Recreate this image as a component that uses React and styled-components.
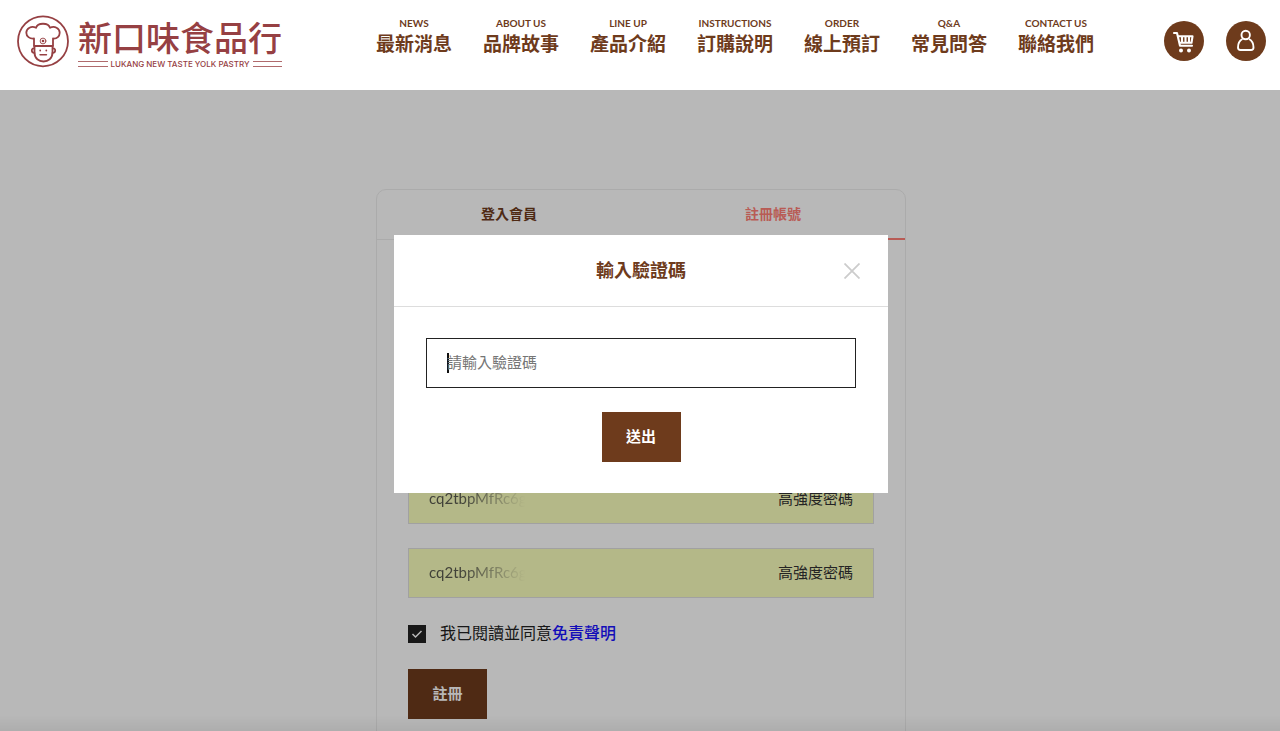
import React, { useState } from 'react';
import styled, { createGlobalStyle, css } from 'styled-components';

const brown = '#6e3b1c';
const logoRed = '#964043';
const coral = '#ff7f77';

const navItems = [
  { en: 'NEWS', label: '最新消息' },
  { en: 'ABOUT US', label: '品牌故事' },
  { en: 'LINE UP', label: '產品介紹' },
  { en: 'INSTRUCTIONS', label: '訂購說明' },
  { en: 'ORDER', label: '線上預訂' },
  { en: 'Q&A', label: '常見問答' },
  { en: 'CONTACT US', label: '聯絡我們' },
];

const ChefIcon = () => (
  <svg width="54" height="54" viewBox="0 0 54 54" aria-hidden="true">
    <g fill="none" stroke={logoRed} strokeWidth="1.8" strokeLinecap="round" strokeLinejoin="round">
      <circle cx="27" cy="27.3" r="25" />
      <path d="M18 32V24.5C13.5 25 10.3 22.2 10.3 18.8C10.3 14.3 15.5 11.3 20 13.8C21.5 8.4 32.5 8.4 34 13.8C38.5 11.3 43.7 14.3 43.7 18.8C43.7 22.2 41 25 37 24.5V32" />
      <path d="M18.5 32H36.5V38.5C36.5 50.5 18.5 50.5 18.5 38.5Z" />
      <path d="M18 34.500C15 34 15 39 18.500 39M37 34.500C40 34 40 39 36.500 39" />
      <path d="M24 40.8H30.5" strokeWidth="1.4" />
      <circle cx="27" cy="27" r="2.9" strokeWidth="0.9" />
    </g>
    <g fill={logoRed}>
      <circle cx="27" cy="27" r="1.3" />
      <circle cx="24.2" cy="36.5" r="0.9" />
      <circle cx="30.3" cy="36.5" r="0.9" />
    </g>
  </svg>
);

const CartIcon = () => (
  <svg width="40" height="40" viewBox="0 0 40 40" fill="none" stroke="#fff" strokeWidth="2.1">
    <path d="M10 12H13L16 24.8H28" strokeLinecap="round" strokeLinejoin="round" />
    <path d="M14 15.3H28.500L27.500 21.800H15.500" strokeLinejoin="round" />
    <path d="M18 15.5V22M21.500 15.5V22M25 15.5V22" />
    <circle cx="17" cy="29.5" r="2" fill="#fff" stroke="none" />
    <circle cx="25" cy="29.5" r="2" fill="#fff" stroke="none" />
  </svg>
);

const UserIcon = () => (
  <svg width="40" height="40" viewBox="0 0 40 40" fill="none" stroke="#fff" strokeWidth="1.9">
    <circle cx="19.7" cy="14" r="4.2" />
    <path
      d="M16.5 18C13.5 19.5 12 22.5 12 26.500Q12 29 14.500 29H25Q27.500 29 27.500 26.500C27.500 22.500 26 19.500 23 18"
      strokeLinejoin="round"
    />
  </svg>
);

const App = () => {
  const [open, setOpen] = useState(true);
  const [code, setCode] = useState('');
  const [agreed, setAgreed] = useState(true);

  //Event Handlers
  const closeHandler = () => setOpen(false);
  const submitHandler = (e) => {
    e.preventDefault();
    setOpen(false);
  };

  return (
    <>
      <GlobalStyle $locked={open} />
      <Header>
        <Logo href="#home">
          <ChefIcon />
          <Brand>
            <BrandName>新口味食品行</BrandName>
            <Tagline>LUKANG NEW TASTE YOLK PASTRY</Tagline>
          </Brand>
        </Logo>
        <Nav>
          {navItems.map((item) => (
            <NavLink href="#nav" key={item.en}>
              <small>{item.en}</small>
              <span>{item.label}</span>
            </NavLink>
          ))}
        </Nav>
        <Actions>
          <RoundButton type="button" aria-label="購物車">
            <CartIcon />
          </RoundButton>
          <RoundButton type="button" aria-label="會員">
            <UserIcon />
          </RoundButton>
        </Actions>
      </Header>

      <Main>
        <Card>
          <Tabs>
            <Tab type="button">登入會員</Tab>
            <Tab type="button" $active>
              註冊帳號
            </Tab>
          </Tabs>
          <Form onSubmit={(e) => e.preventDefault()}>
            <Field>
              <input type="text" aria-label="姓名" />
            </Field>
            <Field>
              <input type="tel" aria-label="手機" />
            </Field>
            <Field>
              <input type="email" aria-label="信箱" />
            </Field>
            <Field $autofill>
              <input type="text" aria-label="密碼" defaultValue="cq2tbpMfRc6g" />
              <span>高強度密碼</span>
            </Field>
            <Field $autofill>
              <input type="text" aria-label="確認密碼" defaultValue="cq2tbpMfRc6g" />
              <span>高強度密碼</span>
            </Field>
            <Agreement>
              <Checkbox
                id="agree"
                type="checkbox"
                checked={agreed}
                onChange={(e) => setAgreed(e.target.checked)}
              />
              <label htmlFor="agree">
                我已閱讀並同意<a href="#disclaimer">免責聲明</a>
              </label>
            </Agreement>
            <Button type="submit">註冊</Button>
          </Form>
        </Card>
      </Main>

      {open && (
        <Overlay>
          <Modal role="dialog" aria-modal="true" aria-labelledby="modal-title">
            <ModalHeader>
              <h2 id="modal-title">輸入驗證碼</h2>
              <CloseButton type="button" aria-label="關閉" onClick={closeHandler}>
                <svg width="16" height="16" viewBox="0 0 16 16" stroke="#ccc" strokeWidth="1.8">
                  <path d="M0.5 0.5L15.5 15.5M15.5 0.5L0.5 15.5" />
                </svg>
              </CloseButton>
            </ModalHeader>
            <ModalBody onSubmit={submitHandler}>
              <CodeInput
                autoFocus
                type="text"
                aria-label="驗證碼"
                placeholder="請輸入驗證碼"
                value={code}
                onChange={(e) => setCode(e.target.value)}
              />
              <Button type="submit">送出</Button>
            </ModalBody>
          </Modal>
        </Overlay>
      )}
    </>
  );
};

//Styled Components
const GlobalStyle = createGlobalStyle`
  * {
    box-sizing: border-box;
    margin: 0;
    padding: 0;
  }
  body {
    background: #fff;
    color: #222;
    font-family: Lato, 'Noto Sans CJK TC', sans-serif;
    overflow: ${(props) => (props.$locked ? 'hidden' : 'auto')};
  }
  button, input {
    font-family: inherit;
  }
  a {
    text-decoration: none;
  }
`;

const Header = styled.header`
  display: flex;
  align-items: flex-start;
  height: 90px;
  padding: 0 14px 0 16px;
  background: #fff;
  position: sticky;
  top: 0;
  z-index: 10;
`;
const Logo = styled.a`
  display: flex;
  gap: 8px;
  padding-top: 14px;
  color: ${logoRed};
  svg {
    display: block;
  }
`;
const Brand = styled.div`
  display: flex;
  flex-direction: column;
  gap: 3px;
  padding-top: 7px;
`;
const BrandName = styled.span`
  font-size: 34px;
  font-weight: 500;
  line-height: 34px;
`;
const Tagline = styled.small`
  display: flex;
  align-items: center;
  gap: 3px;
  font-family: Inter, sans-serif;
  font-size: 8px;
  font-weight: 500;
  line-height: 12px;
  white-space: nowrap;
  &::before,
  &::after {
    content: '';
    flex: 1;
    height: 4px;
    border: solid #b06a6c;
    border-width: 1px 0;
  }
`;
const Nav = styled.nav`
  display: flex;
  gap: 31px;
  margin-left: auto;
  padding-top: 16px;
`;
const NavLink = styled.a`
  display: flex;
  flex-direction: column;
  align-items: center;
  width: 76px;
  color: ${brown};
  font-weight: 700;
  white-space: nowrap;
  small {
    font-size: 10px;
    line-height: 14px;
  }
  span {
    font-size: 19px;
    line-height: 28px;
  }
`;
const Actions = styled.div`
  display: flex;
  gap: 22px;
  margin-left: 70px;
  padding-top: 21px;
`;
const RoundButton = styled.button`
  width: 40px;
  height: 40px;
  border: none;
  border-radius: 50%;
  background: ${brown};
  cursor: pointer;
  svg {
    display: block;
  }
`;

const Main = styled.main`
  padding: 99px 14px 64px 16px;
`;
const Card = styled.section`
  max-width: 530px;
  margin: 0 auto;
  border: 1px solid #eee;
  border-radius: 10px;
`;
const Tabs = styled.div`
  display: flex;
`;
const Tab = styled.button`
  flex: 1;
  height: 50px;
  padding-bottom: 3px;
  border: none;
  border-bottom: 1px solid #eee;
  background: transparent;
  color: ${brown};
  font-size: 14px;
  font-weight: 700;
  cursor: pointer;
  ${(props) =>
    props.$active &&
    css`
      color: ${coral};
      border-bottom-color: ${coral};
      box-shadow: inset 0 -1px ${coral};
    `}
`;
const Form = styled.form`
  display: flex;
  flex-direction: column;
  align-items: flex-start;
  gap: 24px;
  padding: 12px 31px 32px;
`;
const Field = styled.div`
  display: flex;
  align-items: center;
  width: 100%;
  height: 50px;
  padding: 0 20px 3px;
  border: 1px solid #e0e0e0;
  background: ${(props) => (props.$autofill ? '#faffbd' : '#fff')};
  input {
    flex: 1;
    min-width: 0;
    border: none;
    outline: none;
    background: transparent;
    color: #333;
    font-size: 15px;
    ${(props) =>
      props.$autofill &&
      css`
        mask-image: linear-gradient(to right, rgba(0, 0, 0, 0.8) 32px, transparent 96px);
      `}
  }
  span {
    color: #333;
    font-size: 15px;
  }
`;
const Agreement = styled.div`
  display: flex;
  align-items: center;
  gap: 14px;
  height: 23px;
  font-size: 16px;
  label {
    padding-bottom: 3px;
  }
  a {
    color: #1a12ff;
    font-weight: 500;
  }
`;
const Checkbox = styled.input`
  appearance: none;
  width: 18px;
  height: 18px;
  border: 1px solid #222;
  &:checked {
    background: #222
      url("data:image/svg+xml,%3Csvg xmlns='http://www.w3.org/2000/svg' viewBox='0 0 16 16' fill='none' stroke='%23fff' stroke-width='1.5'%3E%3Cpath d='M3.5 8L6.5 11L12.5 5'/%3E%3C/svg%3E");
  }
`;
const Button = styled.button`
  min-width: 79px;
  height: 50px;
  padding: 0 24px 3px;
  border: none;
  background: ${brown};
  color: #fff;
  font-size: 15px;
  font-weight: 700;
  cursor: pointer;
`;

const Overlay = styled.div`
  display: flex;
  align-items: center;
  justify-content: center;
  padding: 0 14px 3px 16px;
  background: linear-gradient(to top, rgba(0, 0, 0, 0.06), transparent 16px) rgba(0, 0, 0, 0.28);
  position: fixed;
  inset: 0;
  z-index: 5;
`;
const Modal = styled.div`
  width: 100%;
  max-width: 494px;
  background: #fff;
`;
const ModalHeader = styled.div`
  display: grid;
  grid-template-columns: 1fr auto 1fr;
  align-items: center;
  height: 72px;
  padding: 0 28px;
  border-bottom: 1px solid #ddd;
  h2 {
    grid-column: 2;
    padding-bottom: 3px;
    color: ${brown};
    font-size: 18px;
    font-weight: 700;
  }
`;
const CloseButton = styled.button`
  justify-self: end;
  border: none;
  background: transparent;
  cursor: pointer;
  svg {
    display: block;
  }
`;
const ModalBody = styled.form`
  display: flex;
  flex-direction: column;
  align-items: center;
  gap: 24px;
  padding: 31px 32px;
`;
const CodeInput = styled.input`
  width: 100%;
  height: 50px;
  padding: 0 20px 2px;
  border: 1px solid #222;
  outline: none;
  background: #fff;
  font-size: 15px;
  &::placeholder {
    color: #757575;
  }
  /* steady cursor while the box is empty */
  &:placeholder-shown {
    caret-color: transparent;
    background: linear-gradient(#111, #111) 20px center / 2px 20px no-repeat;
  }
`;

export default App;
